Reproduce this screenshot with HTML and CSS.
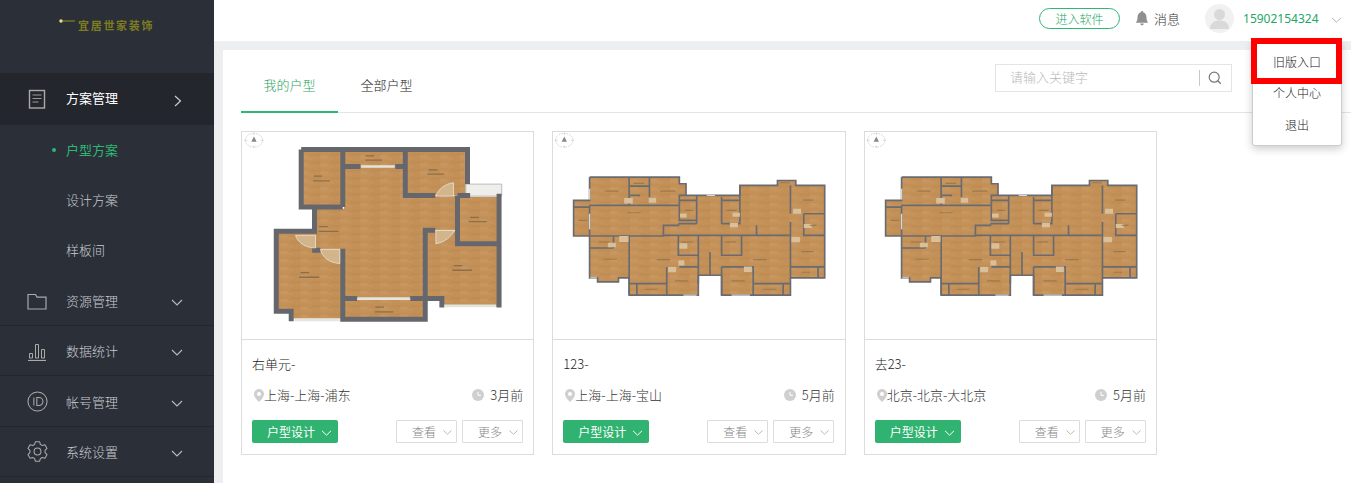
FILE: index.html
```html
<!DOCTYPE html>
<html lang="zh-CN">
<head>
<meta charset="utf-8">
<title>户型方案</title>
<link rel="stylesheet" href="styles.css">
</head>
<body>
<svg class="defs" aria-hidden="true">
  <defs>
    <pattern id="wood" width="60" height="24" patternUnits="userSpaceOnUse">
      <rect width="60" height="24" fill="#c39058"/>
      <rect y="0" width="38" height="6" fill="#c6955d"/>
      <rect x="30" y="12" width="30" height="6" fill="#bf8c54"/>
      <rect y="18" width="22" height="6" fill="#c89860"/>
    </pattern>
    <symbol id="compass" viewBox="0 0 60 60" preserveAspectRatio="none">
      <circle cx="30" cy="30" r="26" fill="none" stroke="#bbb" stroke-width="2" stroke-dasharray="5 3"/>
      <path d="M30 16l8 20H22z" fill="#888"/>
      <path d="M30 1v9M30 50v9M1 30h9M50 30h9" stroke="#bbb" stroke-width="2"/>
    </symbol>
    <symbol id="plan-a" viewBox="4 20 876 621">
      <use href="#compass" x="10" y="20" width="60" height="48"/>
      <g fill="url(#wood)">
        <rect x="186" y="76" width="118" height="168"/>
        <rect x="311" y="76" width="180" height="48"/>
        <rect x="499" y="76" width="180" height="134"/>
        <path d="M311 124H491V212H650V315H555V520H311V372H226V250H311z"/>
        <rect x="656" y="214" width="118" height="140"/>
        <path d="M560 318H650V356H774V545H600V520H560z"/>
        <path d="M111 322H226V372H304V580H158V558H111z"/>
        <rect x="311" y="524" width="242" height="56"/>
      </g>
      <path d="M677 176H785V212H677z" fill="#eeeeea" stroke="#bdbdbd" stroke-width="3"/>
      <g fill="none" stroke="#66676d" stroke-width="15">
        <path d="M182 72H682V176M182 72V245H307M307 72V245M495 72V210H585M222 245V318H107V558H152V588"/>
        <path d="M307 370V582H555V315H585M307 520H350M510 520H605V547M652 210H690M652 210V355H775M777 205V547M215 375H240M307 123H360M465 123H495"/>
      </g>
      <g fill="none" stroke="#e4e4df" stroke-width="8">
        <path d="M362 123H463M352 520H508M162 584H298M612 542H768"/>
      </g>
      <g fill="#d3b58b" stroke="#efefef" stroke-width="2">
        <path d="M165 330H225V368C195 368 170 350 165 330z"/>
        <path d="M240 372H298V415C265 412 245 395 240 372z"/>
        <path d="M640 172V212H587C595 190 615 175 640 172z"/>
        <path d="M587 315H642C635 335 610 352 587 355z"/>
      </g>
      <g fill="none" stroke="#7b6340" stroke-width="4" opacity=".75">
        <path d="M375 91h26M375 104h50M565 133h26M562 146h50M220 152h24M218 166h50M690 276h26M686 289h54M236 304h26M234 318h60M180 442h26M176 456h60M640 421h26M636 435h60M405 546h26M403 560h56"/>
      </g>
    </symbol>
    <symbol id="plan-b" viewBox="8 20 876 621">
      <use href="#compass" x="12" y="20" width="60" height="48"/>
      <path fill="url(#wood)" d="M118 155H388V175H408V210H570V180H683V165H738V180H825V458H722V510H515V450H445V510H237V458H205V470H142V458H118V332H70V225H118z"/>
      <g fill="none" stroke="#6a6b70" stroke-width="5">
        <path d="M118 155H388V175H408V210H388V240M408 210H440H570V180H683V165H738V180H825V458H722V510H515V450H445V510H237V458H205V470H142V458H118V332H70V225H118V155"/>
        <path d="M118 240H388M237 155V240M298 155V215M240 210H270M240 182H296M388 225H440V285H388V240M118 332H340V300H388M340 330H720M237 332V510M118 368H190M190 332V368M385 332V390H445M445 332V450M388 425H445V475M350 425V475H237M350 475V510M260 475V510M515 332V390H575V332M515 425V510M515 425H610V510M610 475H722M700 475V510M722 180V265M722 290V458M722 425H825M805 425V458M762 265H825M762 265V330H825M620 300V330M570 180V295H515M515 215V295M440 210V295M515 225H570M480 380V450M70 245H118M118 240V332M388 390H445M385 295H440"/>
      </g>
      <g fill="#d9c09b">
        <path d="M222 218h26v16h-26zM207 332h28v18h-28zM173 352h24v14h-24zM730 250h24v15h-24zM762 296h24v12h-24zM725 335h26v16h-26zM388 354h24v16h-24zM354 425h24v16h-24zM385 405h18v16h-18zM582 424h24v16h-24zM390 264h20v12h-20zM296 218h22v14h-22zM548 262h22v12h-22zM540 292h24v14h-24z"/>
      </g>
      <g fill="none" stroke="#8a7048" stroke-width="3.500" opacity=".7">
        <path d="M165 197h40M250 174h32M330 197h46M232 262h40M85 285h26M145 350h32M160 402h40M320 403h40M375 467h40M284 492h40M545 467h40M640 492h40M610 403h40M760 224h30M755 379h36M755 441h26M780 300h20M690 172h30M405 255h24M530 255h30M395 350h34M525 350h34"/>
      </g>
      <path d="M118 190V222M118 265V312M400 510H440M545 510H600M470 210H495M120 458H140" fill="none" stroke="#d8d8d8" stroke-width="4"/>
    </symbol>
  </defs>
</svg>

<div class="app">
  <aside class="sidebar">
    <div class="logo">
      <svg class="logo-mark" viewBox="0 0 18 6"><circle cx="3" cy="2" r="1.800" fill="#e4dc7c"/><path d="M5 2h12" stroke="#77771f" stroke-width="1.400"/></svg>
      <span class="logo-text">宜居世家装饰</span>
    </div>
    <nav>
      <a class="nav-item nav-active">
        <svg class="nav-icon" viewBox="0 0 20 20"><rect x="2.500" y="1.500" width="15" height="17.500" fill="none" stroke="#aaa" stroke-width="1.400"/><path d="M5.500 6h9M5.500 9.500h9M5.500 13h6" stroke="#999" stroke-width="1.200"/></svg>
        <span>方案管理</span>
        <svg class="nav-arrow-right" viewBox="0 0 8 12"><path d="M1 1l5.500 5L1 11" fill="none" stroke="#ccc" stroke-width="1.200"/></svg>
      </a>
      <a class="sub-item sub-active">户型方案</a>
      <a class="sub-item">设计方案</a>
      <a class="sub-item">样板间</a>
      <a class="nav-item">
        <svg class="nav-icon" viewBox="0 0 20 20"><path d="M1 3.500h7.500l1.500 2.600h9V18H1z" fill="none" stroke="#aaa" stroke-width="1.200"/></svg>
        <span>资源管理</span>
        <svg class="nav-arrow" viewBox="0 0 12 7"><path d="M1 1l5 5 5-5" fill="none" stroke="#bbb" stroke-width="1.100"/></svg>
      </a>
      <a class="nav-item">
        <svg class="nav-icon" viewBox="0 0 20 20"><path d="M2.500 12.500h3v4.500h-3zM8.500 3.500h3V17h-3zM14.500 8.500h3V17h-3z" fill="none" stroke="#aaa"/><path d="M1 19.500h18" stroke="#aaa" stroke-width="1.200"/></svg>
        <span>数据统计</span>
        <svg class="nav-arrow" viewBox="0 0 12 7"><path d="M1 1l5 5 5-5" fill="none" stroke="#bbb" stroke-width="1.100"/></svg>
      </a>
      <a class="nav-item">
        <svg class="nav-icon id-icon" viewBox="0 0 22 22"><circle cx="11" cy="11" r="10" fill="none" stroke="#aaa" stroke-width="1.100"/><path d="M7.200 6.800v8.400M10.300 6.800v8.400h2.200a4.200 4.200 0 0 0 0-8.400z" fill="none" stroke="#aaa" stroke-width="1.100"/></svg>
        <span>帐号管理</span>
        <svg class="nav-arrow" viewBox="0 0 12 7"><path d="M1 1l5 5 5-5" fill="none" stroke="#bbb" stroke-width="1.100"/></svg>
      </a>
      <a class="nav-item">
        <svg class="nav-icon id-icon" viewBox="0 0 22 22"><path d="M8 3.580L8.820.73H13.180L14 3.580 15.930 4.700 18.800 3.970 20.990 7.760 18.920 9.890V12.110L20.990 14.240 18.800 18.030 15.930 17.300 14 18.420 13.180 21.270H8.820L8 18.420 6.070 17.300 3.200 18.030 1.010 14.240 3.080 12.110V9.890L1.010 7.760 3.200 3.970 6.070 4.700z" fill="none" stroke="#aaa" stroke-width="1.100" stroke-linejoin="round"/><circle cx="11" cy="11" r="3.600" fill="none" stroke="#aaa" stroke-width="1.100"/></svg>
        <span>系统设置</span>
        <svg class="nav-arrow" viewBox="0 0 12 7"><path d="M1 1l5 5 5-5" fill="none" stroke="#bbb" stroke-width="1.100"/></svg>
      </a>
    </nav>
  </aside>

  <div class="main">
    <header class="topbar">
      <a class="enter-btn">进入软件</a>
      <span class="msg">
        <svg class="bell" viewBox="0 0 14 15"><path d="M7 0a1.200 1.200 0 0 1 1.200 1.300C10.500 2 11.500 4 11.500 6.500c0 2.500.6 3.800 1.800 5.200H.7C1.900 10.300 2.500 9 2.500 6.500 2.500 4 3.500 2 5.800 1.300A1.200 1.200 0 0 1 7 0zM5.200 12.600h3.600a1.800 1.800 0 0 1-3.600 0z" fill="#8f8f8f"/></svg>
        消息
      </span>
      <span class="avatar">
        <svg viewBox="0 0 29 29"><circle cx="14.500" cy="10.500" r="5.500" fill="#d9d9d9"/><path d="M5 25c0-6 4-8.500 9.500-8.500S24 19 24 25z" fill="#d9d9d9"/></svg>
      </span>
      <span class="phone">15902154324</span>
      <svg class="user-arrow" viewBox="0 0 11 6"><path d="M1 1l4.500 4L10 1" fill="none" stroke="#b5b5b5"/></svg>
      <div class="user-menu">
        <a class="menu-item">旧版入口</a>
        <a class="menu-item">个人中心</a>
        <a class="menu-item">退出</a>
        <div class="highlight"></div>
      </div>
    </header>

    <div class="body-wrap">
      <section class="panel">
        <div class="tabbar">
          <a class="tab tab-active">我的户型</a>
          <a class="tab">全部户型</a>
          <div class="search">
            <span class="search-text">请输入关键字</span>
            <svg class="search-icon" viewBox="0 0 14 14"><circle cx="6.200" cy="6.200" r="5" fill="none" stroke="#777" stroke-width="1.200"/><path d="M9.800 9.800l3 3" stroke="#777" stroke-width="1.300"/></svg>
          </div>
        </div>

        <div class="cards">
          <article class="card">
            <svg class="plan" viewBox="0 0 292 207"><use href="#plan-a" width="292" height="207"/></svg>
            <div class="card-info">
              <div class="card-title">右单元-</div>
              <div class="card-meta">
                <span class="place"><svg class="pin" viewBox="0 0 10 13"><path d="M5 0a5 5 0 0 1 5 5c0 3-3 6-5 8-2-2-5-5-5-8a5 5 0 0 1 5-5z" fill="#cfcfcf"/><circle cx="5" cy="5" r="2" fill="#fff"/></svg>上海-上海-浦东</span>
                <span class="time"><svg class="clock" viewBox="0 0 12 12"><circle cx="6" cy="6" r="6" fill="#cfcfcf"/><path d="M6 3v3.300h3" fill="none" stroke="#fff"/></svg>3月前</span>
              </div>
              <div class="card-actions">
                <a class="btn-main">户型设计<svg viewBox="0 0 11 6"><path d="M1 .8l4.500 4.400L10 .8" fill="none" stroke="#fff"/></svg></a>
                <a class="btn-ghost">查看<svg viewBox="0 0 9 5"><path d="M.5.500l4 3.800 4-3.800" fill="none" stroke="#bbb"/></svg></a>
                <a class="btn-ghost">更多<svg viewBox="0 0 9 5"><path d="M.5.500l4 3.800 4-3.800" fill="none" stroke="#bbb"/></svg></a>
              </div>
            </div>
          </article>

          <article class="card">
            <svg class="plan" viewBox="0 0 292 207"><use href="#plan-b" width="292" height="207"/></svg>
            <div class="card-info">
              <div class="card-title">123-</div>
              <div class="card-meta">
                <span class="place"><svg class="pin" viewBox="0 0 10 13"><path d="M5 0a5 5 0 0 1 5 5c0 3-3 6-5 8-2-2-5-5-5-8a5 5 0 0 1 5-5z" fill="#cfcfcf"/><circle cx="5" cy="5" r="2" fill="#fff"/></svg>上海-上海-宝山</span>
                <span class="time"><svg class="clock" viewBox="0 0 12 12"><circle cx="6" cy="6" r="6" fill="#cfcfcf"/><path d="M6 3v3.300h3" fill="none" stroke="#fff"/></svg>5月前</span>
              </div>
              <div class="card-actions">
                <a class="btn-main">户型设计<svg viewBox="0 0 11 6"><path d="M1 .8l4.500 4.400L10 .8" fill="none" stroke="#fff"/></svg></a>
                <a class="btn-ghost">查看<svg viewBox="0 0 9 5"><path d="M.5.500l4 3.800 4-3.800" fill="none" stroke="#bbb"/></svg></a>
                <a class="btn-ghost">更多<svg viewBox="0 0 9 5"><path d="M.5.500l4 3.800 4-3.800" fill="none" stroke="#bbb"/></svg></a>
              </div>
            </div>
          </article>

          <article class="card">
            <svg class="plan" viewBox="0 0 292 207"><use href="#plan-b" width="292" height="207"/></svg>
            <div class="card-info">
              <div class="card-title">去23-</div>
              <div class="card-meta">
                <span class="place"><svg class="pin" viewBox="0 0 10 13"><path d="M5 0a5 5 0 0 1 5 5c0 3-3 6-5 8-2-2-5-5-5-8a5 5 0 0 1 5-5z" fill="#cfcfcf"/><circle cx="5" cy="5" r="2" fill="#fff"/></svg>北京-北京-大北京</span>
                <span class="time"><svg class="clock" viewBox="0 0 12 12"><circle cx="6" cy="6" r="6" fill="#cfcfcf"/><path d="M6 3v3.300h3" fill="none" stroke="#fff"/></svg>5月前</span>
              </div>
              <div class="card-actions">
                <a class="btn-main">户型设计<svg viewBox="0 0 11 6"><path d="M1 .8l4.500 4.400L10 .8" fill="none" stroke="#fff"/></svg></a>
                <a class="btn-ghost">查看<svg viewBox="0 0 9 5"><path d="M.5.500l4 3.800 4-3.800" fill="none" stroke="#bbb"/></svg></a>
                <a class="btn-ghost">更多<svg viewBox="0 0 9 5"><path d="M.5.500l4 3.800 4-3.800" fill="none" stroke="#bbb"/></svg></a>
              </div>
            </div>
          </article>
        </div>
      </section>
    </div>
  </div>
</div>
</body>
</html>
```

FILE: styles.css
```css
* { box-sizing: border-box; }

html, body {
  margin: 0;
  height: 100%;
  overflow: hidden;
}

body {
  font-family: "Noto Sans CJK SC", "Noto Sans", sans-serif;
  font-size: 13px;
  font-weight: 300;
  color: #222;
  background: #edeef0;
}

.defs { position: absolute; width: 0; height: 0; }

.app { display: flex; height: 483px; }

/* sidebar */
.sidebar {
  width: 214px;
  flex: none;
  background: #2b2f38;
  color: #c9ccd1;
}

.logo {
  height: 73px;
  padding: 18px 0 0 58px;
  display: flex;
  align-items: flex-start;
}
.logo-mark { width: 18px; height: 6px; margin-top: 1px; }
.logo-text {
  margin-left: 2px;
  margin-top: 1px;
  font-family: "Liberation Serif", "Noto Sans CJK SC", serif;
  font-size: 11px;
  line-height: 15px;
  letter-spacing: 1.700px;
  color: #7d7d20;
  font-weight: 700;
}

.nav-item {
  display: flex;
  align-items: center;
  height: 50.300px;
  padding-left: 27px;
  border-bottom: 1px solid #23262d;
}
.nav-active {
  height: 52px;
  background: #23262d;
  color: #fff;
  font-weight: 400;
  border-bottom: 0;
}
.nav-active span { margin-top: -3px; }
.nav-icon { width: 20px; height: 20px; flex: none; margin-right: 19px; }
.id-icon { width: 21px; height: 21px; margin-right: 18px; }
.nav-arrow { width: 12px; height: 7px; margin: 4px 0 0 53px; }
.nav-arrow-right { width: 8px; height: 12px; margin: 4px 0 0 56px; }

.sub-item {
  position: relative;
  display: flex;
  align-items: center;
  height: 50.300px;
  padding: 0 0 2px 66px;
}
.sub-active { color: #2fb574; font-weight: 400; }
.sub-active::before {
  content: "";
  position: absolute;
  left: 52px;
  top: 23px;
  width: 4px;
  height: 4px;
  border-radius: 50%;
  background: #2fb574;
}

/* topbar */
.main { flex: 1; min-width: 0; display: flex; flex-direction: column; }

.topbar {
  position: relative;
  height: 41px;
  flex: none;
  background: #fff;
  display: flex;
  align-items: center;
  padding: 0 0 5px 825px;
}
.enter-btn {
  flex: none;
  width: 81px;
  height: 21px;
  line-height: 20px;
  text-align: center;
  border: 1px solid #2fb574;
  border-radius: 11px;
  color: #24a765;
  font-size: 12px;
}
.msg {
  flex: none;
  display: flex;
  align-items: center;
  margin-left: 15px;
  color: #333;
  white-space: nowrap;
}
.bell { width: 14px; height: 15px; margin-right: 5px; }
.avatar {
  flex: none;
  width: 29px;
  height: 29px;
  margin-left: 25px;
  border-radius: 50%;
  background: #f1f1f1;
  overflow: hidden;
}
.avatar svg { display: block; width: 29px; height: 29px; }
.phone {
  flex: none;
  margin-left: 9px;
  color: #24a765;
  font-family: "Noto Sans", sans-serif;
  font-size: 12px;
  font-weight: 400;
  width: 88px;
}
.user-arrow { flex: none; width: 11px; height: 6px; margin-top: 4px; }

.user-menu {
  position: absolute;
  z-index: 5;
  left: 1038px;
  top: 40px;
  width: 90px;
  height: 106px;
  padding-top: 6px;
  background: #fff;
  border: 1px solid #ccc;
  border-radius: 3px;
  box-shadow: 0 3px 8px rgba(0, 0, 0, .2);
}
.menu-item {
  display: block;
  height: 31.300px;
  line-height: 30px;
  text-align: center;
  font-size: 12px;
  color: #222;
}
.highlight {
  position: absolute;
  left: -2px;
  top: -3px;
  width: 91px;
  height: 46px;
  border: 6px solid #f00;
}

/* content */
.body-wrap { flex: 1; padding: 9px 0 0 9px; min-height: 0; }
.panel { height: 100%; background: #fff; }

.tabbar {
  display: flex;
  height: 63px;
  margin-left: 18px;
  border-bottom: 1px solid #e4e4e4;
}
.tab {
  width: 97px;
  height: 63px;
  line-height: 69px;
  text-align: center;
  color: #222;
}
.tab-active {
  color: #1fa360;
  border-bottom: 2px solid #2fb574;
}
.search {
  display: flex;
  align-items: center;
  width: 237px;
  height: 28px;
  margin: 14px 119px 0 auto;
  padding-left: 14px;
  border: 1px solid #e4e4e4;
}
.search-text {
  flex: none;
  width: 190px;
  height: 16px;
  line-height: 14px;
  color: #b8b8b8;
  border-right: 1px solid #c8c8c8;
}
.search-icon { width: 14px; height: 14px; margin-left: 8px; }

.cards {
  display: flex;
  gap: 18px;
  padding: 18px 0 0 18px;
}
.card {
  width: 293.330px;
  height: 324px;
  border: 1px solid #dcdcdc;
}
.plan {
  display: block;
  width: 100%;
  height: 207px;
  filter: blur(.6px);
}
.card-info {
  height: 115px;
  padding: 0 10px;
  border-top: 1px solid #dcdcdc;
}
.card-title {
  height: 24px;
  margin-top: 12px;
  line-height: 24px;
  color: #222;
}
.card-meta {
  display: flex;
  justify-content: space-between;
  margin-top: 7px;
  height: 24px;
  line-height: 24px;
  color: #333;
}
.place, .time { display: flex; align-items: center; }
.pin { width: 10px; height: 13px; margin: 0 0 0 2px; }
.clock { width: 12px; height: 12px; margin-right: 6px; }

.card-actions {
  display: flex;
  margin-top: 13px;
  gap: 5px;
}
.btn-main {
  display: flex;
  align-items: center;
  width: 86px;
  height: 23px;
  margin-right: 53px;
  background: #30b370;
  border-radius: 2px;
  color: #fff;
  font-size: 12px;
  font-weight: 400;
  padding-left: 15px;
}
.btn-main svg { width: 11px; height: 6px; margin: 2px 0 0 6px; }
.btn-ghost {
  display: flex;
  align-items: center;
  width: 61px;
  height: 23px;
  border: 1px solid #dcdcdc;
  border-radius: 1px;
  color: #888;
  font-size: 12px;
  padding-left: 15px;
}
.btn-ghost svg { width: 9px; height: 5px; margin: 2px 0 0 7px; }
```
